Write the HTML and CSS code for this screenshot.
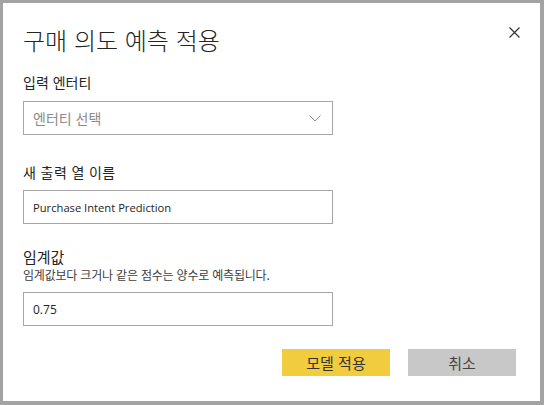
FILE: index.html
```html
<!DOCTYPE html>
<html lang="ko">
<head>
<meta charset="utf-8">
<link rel="stylesheet" href="styles.css">
</head>
<body>
<div class="dialog">
  <button class="close" aria-label="닫기">
    <svg width="11" height="11" viewBox="0 0 11 11"><path d="M0.5 0.5 L10.5 10.5 M10.5 0.5 L0.5 10.5" stroke="#333" stroke-width="1.2" fill="none"/></svg>
  </button>
  <h1 class="title">구매 의도 예측 적용</h1>

  <div class="label l1">입력 엔터티</div>
  <div class="field select">
    <span class="placeholder">엔터티 선택</span>
    <svg class="chev" width="12" height="7" viewBox="0 0 12 7"><path d="M0.5 0.5 L6 6 L11.5 0.5" stroke="#8a8a8a" stroke-width="1" fill="none"/></svg>
  </div>

  <div class="label l2">새 출력 열 이름</div>
  <div class="field input">Purchase Intent Prediction</div>

  <div class="label l3">임계값</div>
  <div class="hint">임계값보다 크거나 같은 점수는 양수로 예측됩니다.</div>
  <div class="field input i3">0.75</div>

  <div class="actions">
    <button class="btn primary">모델 적용</button>
    <button class="btn secondary">취소</button>
  </div>
</div>
</body>
</html>
```
FILE: styles.css
```css
html, body {
  margin: 0;
  padding: 0;
  background: #a3a3a3;
  width: 544px;
  height: 405px;
  overflow: hidden;
}
body {
  font-family: "Noto Sans CJK KR", "Noto Sans", sans-serif;
  color: #252423;
}
.dialog {
  position: relative;
  margin: 3px 4px 4px 3px;
  width: 537px;
  height: 398px;
  box-sizing: border-box;
  background: #fff;
  padding: 21px 0 0 20px;
  display: flex;
  flex-direction: column;
}
.close {
  position: absolute;
  top: 24px;
  right: 20px;
  width: 11px;
  height: 11px;
  padding: 0;
  border: 0;
  background: none;
  display: block;
}
.close svg { display: block; }
.title {
  margin: 0;
  font-size: 24px;
  font-weight: 300;
  line-height: 32px;
  height: 32px;
  color: #252423;
}
.label {
  font-size: 14px;
  line-height: 20px;
  height: 20px;
  color: #252423;
}
.l1 { margin-top: 16px; }
.l2 { margin-top: 27px; letter-spacing: 0.4px; }
.l3 { margin-top: 23px; font-size: 15px; }
.hint {
  font-size: 12px;
  letter-spacing: -0.2px;
  line-height: 16px;
  height: 16px;
  color: #404040;
}
.field {
  width: 310px;
  height: 34px;
  box-sizing: border-box;
  border: 1px solid #a6a6a6;
  display: flex;
  align-items: center;
  padding: 0 9px;
}
.select {
  margin-top: 9px;
  justify-content: space-between;
  padding-right: 11px;
}
.placeholder {
  font-size: 14px;
  color: #8a8a8a;
}
.chev { display: block; }
.input {
  margin-top: 8px;
  font-family: "Open Sans", "Noto Sans", sans-serif;
  font-size: 11.2px;
  color: #252423;
}
.i3 { margin-top: 9px; font-size: 12px; }
.actions {
  margin-top: 23px;
  display: flex;
  justify-content: flex-end;
  gap: 18px;
  padding-right: 24px;
}
.btn {
  width: 108px;
  height: 27px;
  border: 0;
  padding: 0;
  font-family: "Noto Sans CJK KR", sans-serif;
  font-size: 15px;
  color: #333;
}
.primary { background: #f2cc3f; }
.secondary { background: #c8c8c8; color: #444; }
```
